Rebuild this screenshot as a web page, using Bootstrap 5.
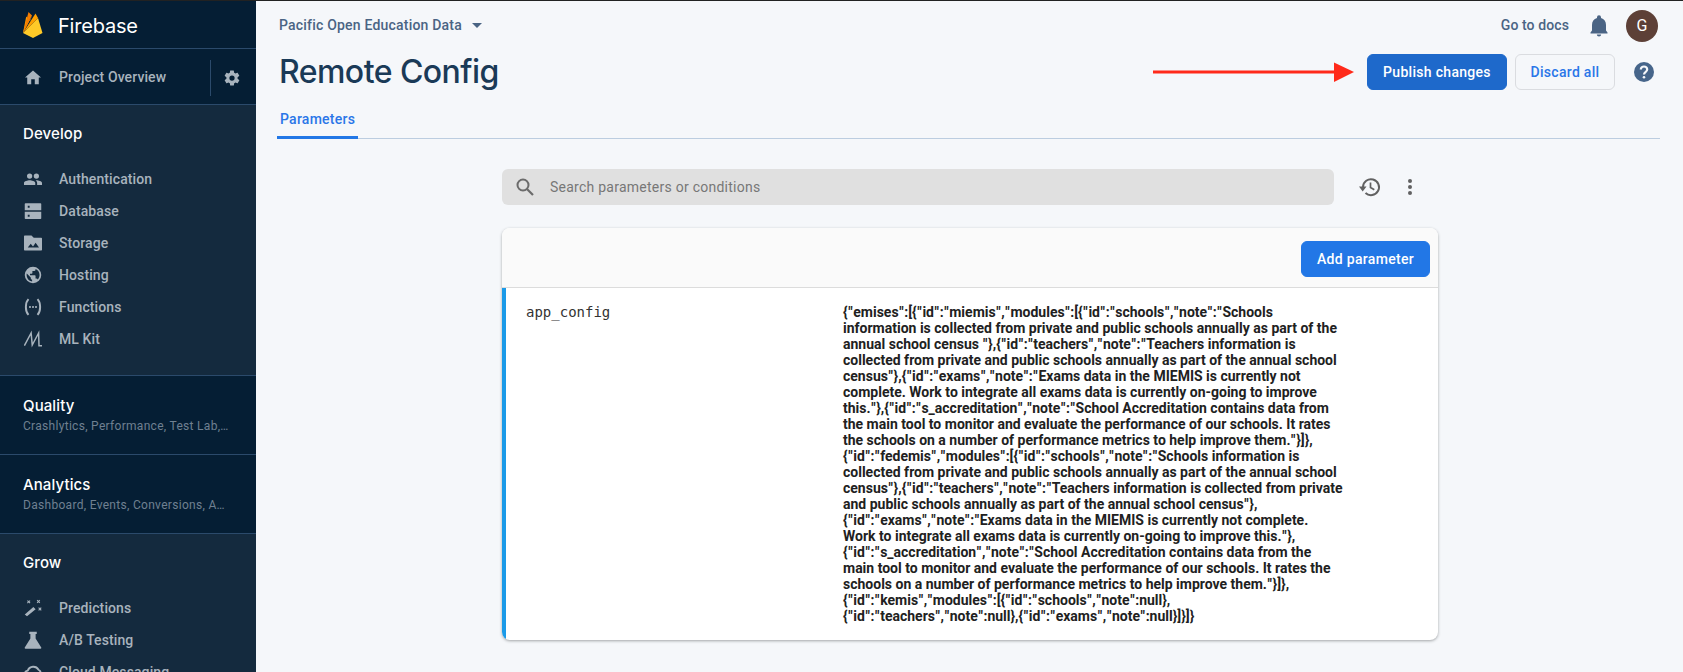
<!DOCTYPE html>
<html lang="en"><head><meta charset="utf-8"><title>Remote Config</title>
<link href="https://cdn.jsdelivr.net/npm/bootstrap@5.3.0/dist/css/bootstrap.min.css" rel="stylesheet">
<style>
html,body{height:672px;overflow:hidden}
body{font-family:Roboto,sans-serif;background:#f5f7fa;color:#1f3a57;border-top:1px solid #222}
.shell{height:671px}
.side{width:256px;flex:none;background:#142a3e;overflow:hidden;color:#fff}
.side>*{flex:none}
.brand{height:48px;background:#051e34;border-bottom:1px solid #2b4a6b;padding-left:23px;gap:15px}
.brand-name{font:400 20px/1 Inter,Roboto,sans-serif;letter-spacing:-.2px;padding-top:2px}
.overview{height:56px;background:#051e34;border-bottom:1px solid #2b4a6b;padding-left:25px;padding-top:2px}
.navitem{height:32px;padding-left:24px;color:#a8b3bd;font-size:14px;font-weight:500;letter-spacing:.1px;flex:none}
.navitem svg{width:18px;height:18px;fill:#a8b3bd;flex:none;margin-right:17px}
.ovicon{margin-right:18px}
.side-sec{padding-top:19px;height:271px;border-bottom:1px solid #2b4a6b}
.side-head{font:500 15px/20px Inter,Roboto,sans-serif;padding-left:23px;margin-bottom:19px;letter-spacing:.1px}
.side-col{height:79px;background:#051e34;border-bottom:1px solid #2b4a6b;padding:20px 0 0 23px}
.side-col .side-head{padding:0;margin:0}
.side-sub{font-size:12px;line-height:16px;color:#6f8091;letter-spacing:.3px;width:208px;margin-top:2px;white-space:nowrap;overflow:hidden}
.cog{border-left:1px solid #2b4a6b;height:36px;width:22px;margin-left:auto;margin-right:11px;padding-left:12px;box-sizing:content-box}
.content{min-width:0}
.topline{height:49px;padding:0 25px 0 23px}
.proj{font-size:14px;font-weight:500;color:#4a6484;letter-spacing:.2px}
.tri{width:0;height:0;border-left:5px solid transparent;border-right:5px solid transparent;border-top:5px solid #4a6484;margin-left:10px}
.docs{font-size:14px;font-weight:500;color:#4a6484;letter-spacing:.1px}
.bell{margin-left:20px}
.avatar{width:32px;height:32px;border-radius:50%;background:#5d4037;color:#fff;font-size:16px;margin-left:17px}
.titlerow{height:44px;padding:0 29px 0 23px}
.pagetitle{font:500 32px/44px Inter,Roboto,sans-serif;color:#1a3a57;margin:0;letter-spacing:-.55px}
.pub,.dis,.addp{font-size:14px;font-weight:500;height:36px;padding:0;border-radius:6px;letter-spacing:.3px;line-height:34px;white-space:nowrap;flex:none}
.pub{background:#1e69cb;border-color:#1e69cb;color:#fff;margin-left:13px;width:140px}
.dis{background:transparent;border:1px solid #dadce0;color:#2a76e8;margin-left:8px;width:100px}
.addp{background:#2277e6;border-color:#2277e6;color:#fff;width:129px}
.helpico{width:20px;height:20px;margin:0 0 0 19px;flex:none}
.tabline{margin:0 23px 0 21px;border-bottom:1px solid #bccde0;height:45px}
.tabitem{display:inline-block;font-size:14px;font-weight:500;color:#2a76e8;letter-spacing:.25px;width:81px;height:45px;padding:15px 0 0 3px;border-bottom:3px solid #2277e6;line-height:20px}
.searchrow{width:936px;margin:30px 0 0 246px}
.searchbox{width:832px;height:36px;background:#e0e0e0;border-radius:6px;padding-left:14px;color:#777;font-size:14px;letter-spacing:.25px;flex:none}
.searchicon{margin-right:16px;flex:none}
.histico{margin-left:25px}
.kebab{margin-right:25px}
.paramcard{width:936px;margin:23px 0 0 246px;height:412px;border:0;border-radius:8px;overflow:hidden;background:#fff;box-shadow:0 1px 3px rgba(60,64,67,.45)}
.paramhead{height:60px;background:#fafafa;border-bottom:1px solid #dcdcdc;padding:2px 8px 0 0;flex:none}
.paramrow{border-left:4px solid #1b9ae8;padding:16px 0 0 20px;flex:1}
.pkey{font:400 14px/16px "DejaVu Sans Mono",monospace;color:#333;width:317px;flex:none}
.pval{font-size:14px;line-height:16px;font-weight:700;color:#212121;width:500px;flex:none}
.qt{padding:0 .6px}
.sline{fill:none;stroke:#a8b3bd!important}
</style></head>
<body>
<div class="d-flex shell">
<aside class="side d-flex flex-column">
  <div class="brand d-flex align-items-center">
    <svg width="20" height="26" viewBox="0 0 20 26"><path d="M0 21 3.200 4.500 7 9l2-5z" fill="#ffa000"/><path d="M0 21 9 3.500 5.500 0z" fill="#f57c00"/><path d="M0 21 15 6l4.500 15-9.500 5z" fill="#ffca28"/><path d="M15 6l-2.500-4.500L0 21z" fill="#ffa000"/></svg>
    <span class="brand-name">Firebase</span>
  </div>
  <div class="overview d-flex align-items-center">
    <svg class="ovicon" width="16" height="15" viewBox="0 0 18 16"><path d="M7 15.500v-5.500h4v5.500h4.500V8H18L9 0 0 8h2.500v7.500z" fill="#a8b3bd"/></svg>
    <span class="navitem p-0 d-flex align-items-center">Project Overview</span>
    <span class="cog d-flex align-items-center">
      <svg width="18" height="18" viewBox="0 0 24 24"><path fill="#a8b3bd" d="M19.400 13c.04-.33.07-.66.07-1s-.03-.67-.07-1l2.100-1.650c.2-.15.25-.42.12-.64l-2-3.460c-.12-.22-.38-.3-.6-.22l-2.500 1c-.52-.4-1.080-.73-1.700-.98l-.37-2.650A.5.500 0 0 0 14 2h-4c-.25 0-.46.18-.5.420l-.37 2.650c-.62.25-1.180.58-1.700.98l-2.500-1c-.22-.08-.48 0-.6.220l-2 3.460c-.13.22-.07.490.12.640L4.570 11c-.04.33-.07.67-.07 1s.03.67.07 1l-2.100 1.650c-.2.15-.25.420-.12.640l2 3.460c.12.220.38.300.6.220l2.500-1c.52.400 1.080.730 1.700.980l.37 2.650c.04.240.25.420.5.420h4c.25 0 .46-.18.5-.42l.37-2.650c.62-.25 1.180-.58 1.700-.98l2.500 1c.22.080.48 0 .6-.22l2-3.460c.12-.22.070-.49-.12-.64zM12 15.500a3.500 3.500 0 1 1 0-7 3.500 3.500 0 0 1 0 7z"/></svg>
    </span>
  </div>
  <div class="side-sec">
    <div class="side-head">Develop</div>
    <div class="navitem d-flex align-items-center"><svg viewBox="0 0 24 24"><path d="M16.500 11.500a3.500 3.500 0 1 0 0-7 3.500 3.500 0 0 0 0 7zm-9 0a3.500 3.500 0 1 0 0-7 3.500 3.500 0 0 0 0 7zm0 2c-2.600 0-7.500 1.200-7.500 3.700V20h15v-2.800c0-2.500-4.900-3.700-7.500-3.700zm9 0c-.3 0-.7 0-1 .05 1.200.85 2 2 2 3.650V20H24v-2.800c0-2.500-4.900-3.700-7.500-3.700z"/></svg>Authentication</div>
    <div class="navitem d-flex align-items-center"><svg viewBox="0 0 24 24"><path d="M2 1.500h20a1 1 0 0 1 1 1V11H1V2.500a1 1 0 0 1 1-1zm3 3.500v2.500h2.500V5zM1 13h22v8.500a1 1 0 0 1-1 1H2a1 1 0 0 1-1-1zm4 4v2.500h2.500V17z"/></svg>Database</div>
    <div class="navitem d-flex align-items-center"><svg viewBox="0 0 24 24"><path d="M10 2H1a1 1 0 0 0-1 1v18a1 1 0 0 0 1 1h22a1 1 0 0 0 1-1V6a1 1 0 0 0-1-1H13zM5 18l4-5 3 3.500 3.500-5L20 18z"/></svg>Storage</div>
    <div class="navitem d-flex align-items-center"><svg viewBox="0 0 24 24"><path d="M12 1a11 11 0 1 0 0 22 11 11 0 0 0 0-22zm-1.200 19.500A8.700 8.700 0 0 1 3.500 12c0-.7.100-1.300.2-2l5.300 5.300v1.100a2 2 0 0 0 1.800 2zm7.500-2.500a2 2 0 0 0-1.900-1.400h-1v-3.200a1 1 0 0 0-1-1H8v-2.200h2.200a1 1 0 0 0 1-1V6.500h2.200a2 2 0 0 0 2-2V4a8.700 8.700 0 0 1 2.900 14z"/></svg>Hosting</div>
    <div class="navitem d-flex align-items-center"><svg viewBox="0 0 24 24"><path class="sline" stroke-width="2.600" d="M6 1.500C3.500 4 2.500 8 2.500 12s1 8 3.500 10.500M18 1.500c2.500 2.500 3.500 6.500 3.500 10.500s-1 8-3.500 10.500"/><circle cx="8" cy="12" r="1.400"/><circle cx="12" cy="12" r="1.400"/><circle cx="16" cy="12" r="1.400"/></svg>Functions</div>
    <div class="navitem d-flex align-items-center"><svg viewBox="0 0 24 24"><path class="sline" stroke-width="2" d="M.5 21 9.500 4 11 20 19.500 4 20 21H24"/></svg>ML Kit</div>
  </div>
  <div class="side-col"><div class="side-head">Quality</div><div class="side-sub">Crashlytics, Performance, Test Lab,…</div></div>
  <div class="side-col"><div class="side-head">Analytics</div><div class="side-sub">Dashboard, Events, Conversions, A…</div></div>
  <div class="side-sec border-0">
    <div class="side-head">Grow</div>
    <div class="navitem d-flex align-items-center"><svg viewBox="0 0 24 24"><path d="M1 20.500 12.500 10.500l3 3L4 23zM5 1.500 6.300 2.800 7.600 1.500l1 1-1.300 1.300L8.600 5l-1 1-1.300-1.300L5 6 4 5l1.300-1.200L4 2.500zM18 1l1.300 1.300L20.600 1l1 1-1.300 1.300 1.300 1.200-1 1-1.300-1.200L18 5.500l-1-1 1.300-1.200L17 2zM20 11l1.300 1.300 1.200-1.300 1 1-1.200 1.300 1.200 1.200-1 1-1.200-1.200L20 15.500l-1-1 1.300-1.200L19 12z"/></svg>Predictions</div>
    <div class="navitem d-flex align-items-center"><svg viewBox="0 0 24 24"><path d="M7 1h10v3h-1.500v6L23 22a1 1 0 0 1-1 1.500H2A1 1 0 0 1 1 22L8.500 10V4H7z"/></svg>A/B Testing</div>
    <div class="navitem d-flex align-items-center"><svg viewBox="0 0 24 24"><path class="sline" stroke-width="2.400" d="M6 20A5 5 0 0 1 5 10.100 8 8 0 0 1 19.400 9 6 6 0 0 1 18 20z"/></svg>Cloud Messaging</div>
  </div>
</aside>
<main class="content flex-grow-1">
  <div class="topline d-flex align-items-center">
    <span class="proj">Pacific Open Education Data</span><span class="tri"></span>
    <span class="docs ms-auto">Go to docs</span>
    <svg class="bell" width="20" height="22" viewBox="0 0 20 22"><path fill="#4a6484" d="M10 21.500a2.200 2.200 0 0 0 2.200-2.100H7.800a2.200 2.200 0 0 0 2.200 2.100zM17 15.500V10c0-3.400-1.800-6.100-5-6.900V2.300a2 2 0 0 0-4 0v.8C4.800 3.900 3 6.600 3 10v5.500L1.500 17.500v1h17v-1z"/></svg>
    <span class="avatar d-flex align-items-center justify-content-center">G</span>
  </div>
  <div class="titlerow d-flex align-items-center">
    <h1 class="pagetitle">Remote Config</h1>
    <svg class="ms-auto" width="201" height="22" viewBox="0 0 201 22"><path d="M0 9.500h182V12.500H0z" fill="#ff2a1a"/><path d="M181 1.500 201 11 181 21z" fill="#ff2a1a"/></svg>
    <button class="btn pub">Publish changes</button>
    <button class="btn dis">Discard all</button>
    <svg class="helpico" viewBox="0 0 20 20"><circle cx="10" cy="10" r="10" fill="#46658a"/><path fill="none" stroke="#f5f7fa" stroke-width="2.200" d="M6.800 7.500A3.200 3 0 0 1 13.200 7.500c0 2.300-3.200 2.300-3.200 5"/><circle cx="10" cy="15.300" r="1.300" fill="#f5f7fa"/></svg>
  </div>
  <div class="tabline"><span class="tabitem">Parameters</span></div>
  <div class="searchrow d-flex align-items-center">
    <div class="searchbox d-flex align-items-center">
      <svg class="searchicon" width="18" height="18" viewBox="0 0 18 18"><circle cx="7" cy="7" r="5.500" fill="none" stroke="#6b6b6b" stroke-width="2"/><path d="M11 11l6 6" stroke="#6b6b6b" stroke-width="2.200"/></svg>
      Search parameters or conditions
    </div>
    <svg class="histico" width="22" height="20" viewBox="0 0 22 20"><path fill="none" stroke="#616161" stroke-width="2" d="M4 10a8 8 0 1 1 2.500 6"/><path fill="#616161" d="M0 9.500h7.500L3.700 14.500z"/><path fill="none" stroke="#616161" stroke-width="1.700" d="M11.500 5.500v5l3.800 2.200"/></svg>
    <svg class="ms-auto kebab" width="6" height="18" viewBox="0 0 6 18"><circle cx="3" cy="3" r="2" fill="#616161"/><circle cx="3" cy="9" r="2" fill="#616161"/><circle cx="3" cy="15" r="2" fill="#616161"/></svg>
  </div>
  <div class="card paramcard d-flex flex-column">
    <div class="paramhead d-flex align-items-center justify-content-end"><button class="btn addp">Add parameter</button></div>
    <div class="paramrow d-flex">
      <div class="pkey">app_config</div>
      <div class="pval" id="jsonval">{"emises":[{"id":"miemis","modules":[{"id":"schools","note":"Schools information is collected from private and public schools annually as part of the annual school census "},{"id":"teachers","note":"Teachers information is collected from private and public schools annually as part of the annual school census"},{"id":"exams","note":"Exams data in the MIEMIS is currently not complete. Work to integrate all exams data is currently on-going to improve this."},{"id":"s_accreditation","note":"School Accreditation contains data from the main tool to monitor and evaluate the performance of our schools. It rates the schools on a number of performance metrics to help improve them."}]},<br>{"id":"fedemis","modules":[{"id":"schools","note":"Schools information is collected from private and public schools annually as part of the annual school census"},{"id":"teachers","note":"Teachers information is collected from private and public schools annually as part of the annual school census"},<br>{"id":"exams","note":"Exams data in the MIEMIS is currently not complete. Work to integrate all exams data is currently on-going to improve this."},<br>{"id":"s_accreditation","note":"School Accreditation contains data from the main tool to monitor and evaluate the performance of our schools. It rates the schools on a number of performance metrics to help improve them."}]},<br>{"id":"kemis","modules":[{"id":"schools","note":null},<br>{"id":"teachers","note":null},{"id":"exams","note":null}]}]}</div>
    </div>
  </div>
</main>
</div>
<script src="https://cdn.jsdelivr.net/npm/bootstrap@5.3.0/dist/js/bootstrap.bundle.min.js"></script>
<script>
var jv=document.getElementById('jsonval');
jv.innerHTML=jv.innerHTML.replace(/"/g,'<span class="qt">"</span>');
</script>
</body></html>
